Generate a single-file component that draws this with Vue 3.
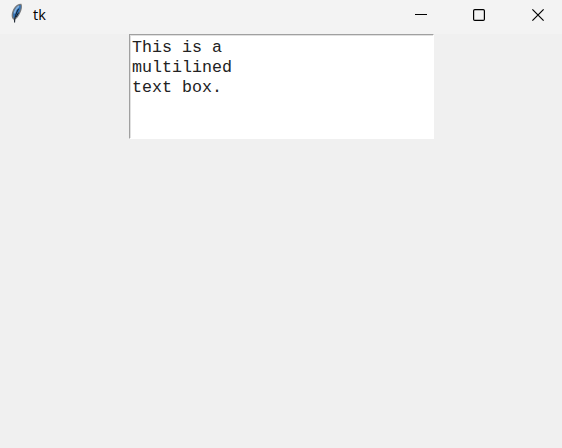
<script setup>
import { ref } from 'vue'

const title = ref('tk')
const lines = ref(['This is a', 'multilined', 'text box.'])
</script>

<template>
  <div class="window">
    <header class="titlebar">
      <svg class="feather" width="14" height="22" viewBox="0 0 14 22">
        <path d="M4.6 20.5 L3.6 17.6 C1.2 16.5 1 11.5 3.4 7 C5.4 3.4 8.6 1.6 11.4 1.8 C12.6 4 12 7.6 10 11.6 C8.6 14.6 7 16.6 5.2 17.6 Z" fill="#77797c" />
        <path d="M3.6 16 C2.4 12.4 3.6 8.6 6 5.8 C7.8 3.8 9.4 3 10.7 3 C11.2 5.4 10.2 8.8 8.4 12 C7.2 14.2 5.8 15.6 3.6 16 Z" fill="#2f72b8" />
        <path d="M4.4 11.5 C5 8.4 6.8 5.8 9 4.2" fill="none" stroke="#86b2dc" stroke-width="1.5" />
        <path d="M4.6 20.5 C4.4 16 6 11 8.6 6.8 M6 15 L8.6 10.6" fill="none" stroke="#101a26" stroke-width="1" />
      </svg>
      <span class="title">{{ title }}</span>
      <div class="controls">
        <svg width="59" height="34" viewBox="0 0 59 34">
          <path d="M24 14.5 H36" stroke="#000" stroke-width="1" />
        </svg>
        <svg width="59" height="34" viewBox="0 0 59 34">
          <rect x="23.6" y="9.6" width="10.8" height="10.8" rx="1.2" fill="none" stroke="#000" stroke-width="1.2" />
        </svg>
        <svg width="53" height="34" viewBox="0 0 53 34">
          <path d="M23.4 9.4 L34.6 20.6 M34.6 9.4 L23.4 20.6" stroke="#000" stroke-width="1.2" />
        </svg>
      </div>
    </header>
    <main class="content">
      <div class="textbox">
        <div v-for="line in lines" :key="line" class="line">{{ line }}</div>
      </div>
    </main>
  </div>
</template>

<style>
body {
  margin: 0;
  background: #f0f0f0;
}
</style>

<style scoped>
.window {
  display: flex;
  flex-direction: column;
  width: 562px;
  height: 448px;
  background: #f0f0f0;
}
.titlebar {
  display: flex;
  align-items: flex-start;
  height: 34px;
  background: #f3f3f3;
}
.feather {
  flex: none;
  margin: 2px 0 0 10px;
}
.title {
  margin-left: 9px;
  font: 14.5px/30px "Open Sans", sans-serif;
  color: #000;
}
.controls {
  display: flex;
  margin-left: auto;
}
.content {
  display: flex;
  flex: 1;
  justify-content: center;
  align-items: flex-start;
}
.textbox {
  box-sizing: border-box;
  width: 305px;
  height: 105px;
  margin-left: 1px;
  padding: 3px 0 0 2px;
  border: 1px solid #fff;
  border-top-color: #a0a0a0;
  border-left-color: #a0a0a0;
  box-shadow: inset 1px 1px 0 #e0e0e0;
  background: #fff;
}
.line {
  font: 16.67px/20px "Liberation Mono", monospace;
  color: #222;
  white-space: pre;
}
</style>
